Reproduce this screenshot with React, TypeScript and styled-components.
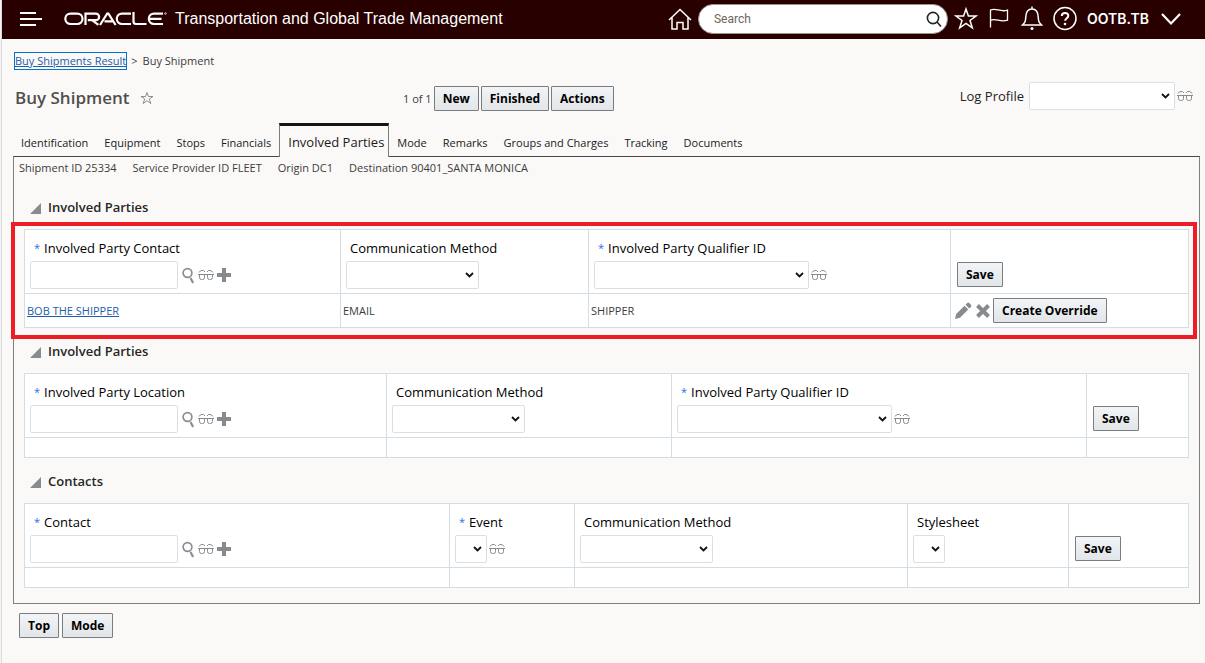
import React from "react";
import styled, { createGlobalStyle, css } from "styled-components";

const Global = createGlobalStyle`
  *, *::before, *::after { box-sizing: border-box; }
  body { margin: 0; background: #fbf9f8; color: #3c3c3c; font: 11px/16px "Open Sans", "Noto Sans", sans-serif; }
  button, input, select { font-family: inherit; }
`;

const Page = styled.div`
  min-height: 100vh;
  padding-left: 2px;
  background: linear-gradient(to right, #f3f3f3 1px, #dcdcde 1px, #dcdcde 2px, #fbf9f8 2px);
`;

const Header = styled.header`
  display: flex;
  align-items: center;
  height: 39px;
  padding: 0 23px 2px 17px;
  background: #280000;
  color: #fff;
`;

const IconButton = styled.button<{ $w?: number; $h?: number }>`
  display: inline-flex;
  align-items: center;
  justify-content: center;
  flex: none;
  width: ${(p) => p.$w ?? 16}px;
  height: ${(p) => p.$h ?? 16}px;
  padding: 0;
  border: 0;
  background: none;
  color: inherit;
  svg { display: block; }
`;

const Logo = styled.svg`
  margin-left: 21px;
  flex: none;
`;

const AppName = styled.div`
  flex: 1;
  margin-left: 8px;
  font: 16px/20px "Liberation Sans", Arial, sans-serif;
  white-space: nowrap;
`;

const HeaderTools = styled.div`
  display: flex;
  align-items: center;
`;

const SearchBox = styled.div`
  display: flex;
  align-items: center;
  width: 250px;
  height: 30px;
  margin: 0 6px 0 5px;
  padding: 0 5px 0 15px;
  border: 1px solid #9a9392;
  border-radius: 15px;
  background: #fff;
  color: #222;
`;

const SearchInput = styled.input`
  flex: 1;
  min-width: 0;
  padding: 0;
  border: 0;
  outline: 0;
  background: none;
  font: 12px/16px Roboto, sans-serif;
  &::placeholder { color: #6b6660; opacity: 1; }
`;

const IconRow = styled.div`
  display: flex;
  gap: 9px;
`;

const UserButton = styled.button`
  display: flex;
  align-items: center;
  gap: 11px;
  margin-left: 10px;
  padding: 0;
  border: 0;
  background: none;
  color: #fff;
  font: 600 14px/16px Inter, sans-serif;
`;

const Breadcrumb = styled.nav`
  display: flex;
  gap: 5px;
  padding: 14px 13px 0;
  color: #3c3c3c;
`;

const CrumbLink = styled.a`
  height: 16px;
  color: #1f5ea8;
  outline: 1px solid #0572ce;
`;

const TitleBar = styled.div`
  display: grid;
  grid-template-columns: 388px 1fr auto;
  align-items: center;
  height: 42px;
  margin-top: 6px;
  padding: 0 12px 0 13px;
`;

const TitleGroup = styled.div`
  display: flex;
  align-items: center;
  gap: 9px;
  padding-top: 4px;
`;

const Title = styled.h1`
  margin: 0;
  color: #4f4f4f;
  font-size: 17px;
  line-height: 24px;
  font-weight: 600;
`;

const Actions = styled.div`
  display: flex;
  align-items: center;
  gap: 2px;
  padding-top: 5px;
`;

const Button = styled.button`
  height: 25px;
  padding: 1px 8px 0;
  border: 1px solid #7a7d80;
  border-radius: 1px;
  background: linear-gradient(#f2f4f6, #e2e6e9);
  color: #000;
  font-size: 12px;
  line-height: 18px;
  font-weight: 700;
  white-space: nowrap;
`;

const LogProfile = styled.div`
  display: flex;
  align-items: center;
  gap: 2px;
  color: #222;
  label { margin-right: 3px; font-size: 13px; font-weight: 500; }
`;

const TextInput = styled.input`
  width: 148px;
  height: 28px;
  margin-right: 2px;
  padding: 0 4px;
  border: 1px solid #dcdfe1;
  border-radius: 2px;
  background: #fff;
`;

const Chevron = `url("data:image/svg+xml,%3Csvg xmlns='http://www.w3.org/2000/svg' width='9' height='6'%3E%3Cpath d='M1 1l3.5 3.5L8 1' fill='none' stroke='%23111' stroke-width='1.8'/%3E%3C/svg%3E")`;

const Select = styled.select<{ $w: number }>`
  width: ${(p) => p.$w}px;
  height: 28px;
  padding: 0 ${(p) => (p.$w < 40 ? 0 : 20)}px 0 4px;
  border: 1px solid #dcdfe1;
  border-radius: 2px;
  appearance: none;
  background: #fff ${Chevron} no-repeat right 4px center;
`;

const Tabs = styled.div`
  display: flex;
  align-items: flex-end;
  height: 34px;
  margin: 6px 0 -1px 11px;
  position: relative;
`;

const Tab = styled.button<{ $active?: boolean }>`
  height: 28px;
  padding: 0 8px;
  border: 0;
  background: none;
  color: #1a1a1a;
  font-size: 11px;
  line-height: 16px;
  font-weight: 500;
  white-space: nowrap;
  ${(p) =>
    p.$active &&
    css`
      height: 34px;
      padding: 1px 4px 0 8px;
      border: 1px solid #7d7d7d;
      border-top: 3px solid #161513;
      border-bottom: 0;
      background: #fbf9f8;
      font-size: 13px;
    `}
`;

const Panel = styled.main`
  margin: 0 5px 0 11px;
  padding: 0 10px 15px;
  border: 1px solid #808080;
  border-top-color: #4a4a48;
`;

const Summary = styled.div`
  display: flex;
  gap: 16px;
  height: 38px;
  margin-left: -5px;
  padding-top: 3px;
`;

const Section = styled.section`
  & + & { margin-top: 11px; }
`;

const SectionTitle = styled.h2`
  display: flex;
  align-items: center;
  gap: 7px;
  height: 24px;
  margin: 0 0 10px;
  padding-left: 6px;
  color: #262626;
  font-size: 13px;
  line-height: 22px;
  font-weight: 600;
`;

const Collapse = styled.button`
  width: 11px;
  height: 11px;
  margin-top: 3px;
  padding: 0;
  border: 0;
  background: #858b8f;
  clip-path: polygon(100% 0, 100% 100%, 0 100%);
`;

const TableWrap = styled.div<{ $marked?: boolean }>`
  position: relative;
  ${(p) =>
    p.$marked &&
    css`
      &::after {
        content: "";
        position: absolute;
        inset: -7px -8px -11px -13px;
        border: 4px solid #ee1c24;
        pointer-events: none;
      }
    `}
`;

const Table = styled.table`
  width: 100%;
  border-collapse: collapse;
  table-layout: fixed;
  background: #fff;
`;

const HeadCell = styled.th`
  height: 64px;
  padding: 0 5px 4px;
  border: 1px solid #d3dde5;
  text-align: left;
  vertical-align: bottom;
  font-weight: 400;
`;

const Cell = styled.td<{ $tall?: boolean }>`
  height: ${(p) => (p.$tall ? 34 : 20)}px;
  padding: 0 2px;
  border: 1px solid #d3dde5;
`;

const FieldLabel = styled.label`
  display: flex;
  gap: 4px;
  margin-bottom: 4px;
  padding-left: 4px;
  color: #000;
  font-size: 13px;
  line-height: 18px;
  font-weight: 500;
`;

const Star = styled.span`
  color: #1f6fe5;
  font-size: 11px;
`;

const Controls = styled.div`
  display: flex;
  align-items: center;
  gap: 2px;
  color: #858b8f;
`;

const SaveSlot = styled.div`
  padding: 0 1px 2px;
`;

const RecordLink = styled.a`
  color: #1f5ea8;
`;

const Footer = styled.footer`
  display: flex;
  gap: 3px;
  padding: 9px 17px;
`;

const Glasses = () => (
  <svg width="16" height="12" viewBox="0 0 16 12" fill="none" stroke="#858b8f">
    <path d="M0 5.500h16M1.500 5.500v3q0 2 2 2h1q2 0 2-2v-3M9.500 5.500v3q0 2 2 2h1q2 0 2-2v-3" />
    <path d="M1 3.500q1-2 3-2h1.500l1.500 1.500M15 3.500q-1-2-3-2h-1.500L9 3" />
  </svg>
);

const Lens = () => (
  <svg width="14" height="17" viewBox="0 0 14 17" fill="none" stroke="#8b8f93">
    <circle cx="5.500" cy="6" r="4.400" strokeWidth="1.700" />
    <path d="M8.500 11l2.600 5" strokeWidth="2.200" />
  </svg>
);

const Plus = () => (
  <svg width="14" height="14" viewBox="0 0 14 14">
    <path d="M5 0h4v5h5v4H9v5H5V9H0V5h5z" fill="#858b8f" />
  </svg>
);

const OracleLogo = () => (
  <Logo width="103" height="14" viewBox="0 0 103 14" fill="none" stroke="#fff" strokeWidth="2.2" role="img" aria-label="Oracle">
    <path d="M6.5 1.6h6.8a5 5 0 0 1 0 10.4H6.5a5 5 0 0 1 0-10.4z" />
    <path d="M21.5 13V1.6h10.3a3.3 3.3 0 0 1 0 6.6h-8M28 8.2l6.4 4.6" />
    <path d="M36 13l7-11.2q.8-1 1.6 0L51.6 13M40.5 9.4h8.4" />
    <path d="M67 1.6H58a5 5 0 0 0 0 10.4h9" />
    <path d="M69.5 0v9.5q0 2.5 2.5 2.5h10.5" />
    <path d="M99 1.6h-9a5 5 0 0 0 0 10.4h9M85.500 6.8h12" />
    <circle cx="101.500" cy="1.500" r="0.800" strokeWidth="0.800" />
  </Logo>
);

const FieldIcons = ({ name }: { name: string }) => (
  <>
    <IconButton $w={14} $h={18} aria-label={`Find ${name}`}><Lens /></IconButton>
    <IconButton aria-label={`View ${name}`}><Glasses /></IconButton>
    <IconButton aria-label={`New ${name}`}><Plus /></IconButton>
  </>
);

type Field = {
  label?: string;
  required?: boolean;
  width: number;
  kind: "text" | "select" | "save";
  size?: number;
  view?: boolean;
};

const HeadField = ({ field, id }: { field: Field; id: string }) => {
  if (field.kind === "save") {
    return <HeadCell><SaveSlot><Button>Save</Button></SaveSlot></HeadCell>;
  }
  return (
    <HeadCell>
      <FieldLabel htmlFor={id}>
        {field.required && <Star>*</Star>}
        {field.label}
      </FieldLabel>
      <Controls>
        {field.kind === "text" ? (
          <>
            <TextInput id={id} />
            <FieldIcons name={field.label!} />
          </>
        ) : (
          <Select id={id} $w={field.size!}><option /></Select>
        )}
        {field.view && <IconButton aria-label={`View ${field.label}`}><Glasses /></IconButton>}
      </Controls>
    </HeadCell>
  );
};

const Grid = ({ id, title, fields, marked, children }: {
  id: string; title: string; fields: Field[]; marked?: boolean; children?: React.ReactNode;
}) => (
  <Section>
    <SectionTitle><Collapse aria-label={`Collapse ${title}`} />{title}</SectionTitle>
    <TableWrap $marked={marked}>
      <Table>
        <colgroup>{fields.map((f, i) => <col key={i} width={f.width} />)}</colgroup>
        <thead><tr>{fields.map((f, i) => <HeadField key={i} field={f} id={`${id}-${i}`} />)}</tr></thead>
        <tbody>{children ?? <tr>{fields.map((_, i) => <Cell key={i} />)}</tr>}</tbody>
      </Table>
    </TableWrap>
  </Section>
);

const contactFields: Field[] = [
  { label: "Involved Party Contact", required: true, width: 316, kind: "text" },
  { label: "Communication Method", width: 248, kind: "select", size: 133 },
  { label: "Involved Party Qualifier ID", required: true, width: 362, kind: "select", size: 215, view: true },
  { width: 238, kind: "save" },
];
const locationFields: Field[] = [
  { label: "Involved Party Location", required: true, width: 362, kind: "text" },
  { label: "Communication Method", width: 285, kind: "select", size: 133 },
  { label: "Involved Party Qualifier ID", required: true, width: 415, kind: "select", size: 215, view: true },
  { width: 102, kind: "save" },
];
const eventFields: Field[] = [
  { label: "Contact", required: true, width: 425, kind: "text" },
  { label: "Event", required: true, width: 125, kind: "select", size: 32, view: true },
  { label: "Communication Method", width: 333, kind: "select", size: 133 },
  { label: "Stylesheet", width: 161, kind: "select", size: 32 },
  { width: 120, kind: "save" },
];

const tabs = ["Identification", "Equipment", "Stops", "Financials", "Involved Parties", "Mode", "Remarks", "Groups and Charges", "Tracking", "Documents"];
const summary = ["Shipment ID 25334", "Service Provider ID FLEET", "Origin DC1", "Destination 90401_SANTA MONICA"];

export default function App() {
  return (
    <Page>
      <Global />
      <Header>
        <IconButton $w={24} $h={24} aria-label="Menu">
          <svg width="24" height="16" viewBox="0 0 24 16" stroke="#fff" strokeWidth="2"><path d="M1 2h16M1 8h22M1 14h16" /></svg>
        </IconButton>
        <OracleLogo />
        <AppName>Transportation and Global Trade Management</AppName>
        <HeaderTools>
          <IconButton $w={26} $h={26} aria-label="Home">
            <svg width="26" height="26" viewBox="0 0 26 26" fill="none" stroke="#fff" strokeWidth="1.5"><path d="M2 14L13 3.500l11 10.500M5 11.500V23h5v-6.500h6V23h5V11.500" /></svg>
          </IconButton>
          <SearchBox>
            <SearchInput placeholder="Search" aria-label="Search" />
            <IconButton $w={16} $h={18} aria-label="Run search">
              <svg width="16" height="18" viewBox="0 0 16 18" fill="none" stroke="#222" strokeWidth="1.6"><circle cx="7" cy="8" r="5.600" /><path d="M11 12l4 4.500" /></svg>
            </IconButton>
          </SearchBox>
          <IconRow>
            <IconButton $w={24} $h={26} aria-label="Favorites">
              <svg width="24" height="26" viewBox="0 0 24 26" fill="none" stroke="#fff" strokeWidth="1.5"><path d="M12 3l2.400 7H22l-6 4.500 2.300 7.300L12 17.300l-6.300 4.500L8 14.500 2 10h7.600z" /></svg>
            </IconButton>
            <IconButton $w={24} $h={26} aria-label="Watchlist">
              <svg width="24" height="26" viewBox="0 0 24 26" fill="none" stroke="#fff" strokeWidth="1.300"><path d="M3.500 21.500V4c6-2.500 9 2.500 17 .2v10c-8 2.500-11-2.500-17 0" /></svg>
            </IconButton>
            <IconButton $w={24} $h={26} aria-label="Notifications">
              <svg width="24" height="26" viewBox="0 0 24 26" fill="none" stroke="#fff" strokeWidth="1.500"><path d="M2.500 19c3-3 3-4 3.300-8C6 6 8.500 3 12 3s6 3 6.200 8c.3 4 .3 5 3.300 8zM12 .5V3" /><circle cx="12" cy="22.500" r="1.500" fill="#fff" stroke="none" /></svg>
            </IconButton>
            <IconButton $w={24} $h={26} aria-label="Help">
              <svg width="24" height="26" viewBox="0 0 24 26" fill="none" stroke="#fff" strokeWidth="1.500"><circle cx="12" cy="12.500" r="11" /><path d="M8.800 10c0-4 6.500-4 6.500-.2 0 2.400-3.200 2.400-3.200 5" strokeWidth="2" /><circle cx="12" cy="18" r="1.300" fill="#fff" stroke="none" /></svg>
            </IconButton>
          </IconRow>
          <UserButton>
            OOTB.TB
            <svg width="22" height="14" viewBox="0 0 22 14" fill="none" stroke="#fff" strokeWidth="2.200"><path d="M2 2l9 9.500L20 2" /></svg>
          </UserButton>
        </HeaderTools>
      </Header>

      <Breadcrumb aria-label="Breadcrumb">
        <CrumbLink href="#results">Buy Shipments Result</CrumbLink>
        <span>&gt;</span>
        <span>Buy Shipment</span>
      </Breadcrumb>

      <TitleBar>
        <TitleGroup>
          <Title>Buy Shipment</Title>
          <IconButton aria-label="Add to favorites">
            <svg width="14" height="14" viewBox="0 0 14 14" fill="none" stroke="#8b8f93"><path d="M7 1.500l1.400 4H13L9.300 8l1.500 4.500L7 9.700l-3.800 2.800L4.700 8 1 5.500h4.600z" /></svg>
          </IconButton>
        </TitleGroup>
        <Actions>
          <span>1 of 1</span>
          <Button>New</Button>
          <Button>Finished</Button>
          <Button>Actions</Button>
        </Actions>
        <LogProfile>
          <label htmlFor="log-profile">Log Profile</label>
          <Select id="log-profile" $w={146}><option /></Select>
          <IconButton aria-label="View Log Profile"><Glasses /></IconButton>
        </LogProfile>
      </TitleBar>

      <Tabs role="tablist">
        {tabs.map((t) => (
          <Tab key={t} role="tab" aria-selected={t === "Involved Parties"} $active={t === "Involved Parties"}>{t}</Tab>
        ))}
      </Tabs>

      <Panel>
        <Summary>{summary.map((s) => <span key={s}>{s}</span>)}</Summary>
        <Grid id="contact" title="Involved Parties" fields={contactFields} marked>
          <tr>
            <Cell $tall><RecordLink href="#contact">BOB THE SHIPPER</RecordLink></Cell>
            <Cell $tall>EMAIL</Cell>
            <Cell $tall>SHIPPER</Cell>
            <Cell $tall>
              <Controls>
                <IconButton $w={20} $h={18} aria-label="Edit">
                  <svg width="18" height="18" viewBox="0 0 18 18" fill="#858b8f"><path d="M1 17l1.200-5L10.500 3.700l3.800 3.800L6 15.800zM11.500 2.700L13.200 1q1-.8 2 0L17 2.800q.8 1 0 2L15.300 6.500z" /></svg>
                </IconButton>
                <IconButton aria-label="Delete">
                  <svg width="16" height="16" viewBox="0 0 16 16" stroke="#858b8f" strokeWidth="4"><path d="M2.500 2.500l11 11M13.500 2.500l-11 11" /></svg>
                </IconButton>
                <Button>Create Override</Button>
              </Controls>
            </Cell>
          </tr>
        </Grid>
        <Grid id="location" title="Involved Parties" fields={locationFields} />
        <Grid id="event" title="Contacts" fields={eventFields} />
      </Panel>

      <Footer>
        <Button>Top</Button>
        <Button>Mode</Button>
      </Footer>
    </Page>
  );
}
